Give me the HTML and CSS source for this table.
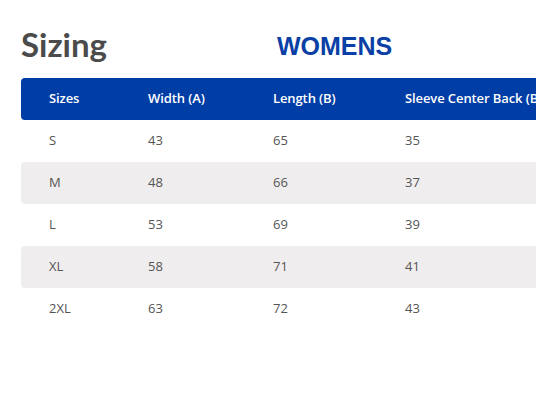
FILE: index.html
```html
<!DOCTYPE html>
<html lang="en">
<head>
    <meta charset="UTF-8">
    <title>Sizing</title>
    <link rel="stylesheet" href="styles.css">
</head>
<body>
    <div class="page">
        <!-- title row -->
        <div class="title-row">
            <h1 class="title">Sizing</h1>
            <h2 class="subtitle">WOMENS</h2>
        </div>

        <!-- size table -->
        <div class="size-table">
            <div class="row head">
                <div class="cell">Sizes</div>
                <div class="cell">Width (A)</div>
                <div class="cell">Length (B)</div>
                <div class="cell">Sleeve Center Back (B)</div>
            </div>
            <div class="row">
                <div class="cell">S</div><div class="cell">43</div><div class="cell">65</div><div class="cell">35</div>
            </div>
            <div class="row alt">
                <div class="cell">M</div><div class="cell">48</div><div class="cell">66</div><div class="cell">37</div>
            </div>
            <div class="row">
                <div class="cell">L</div><div class="cell">53</div><div class="cell">69</div><div class="cell">39</div>
            </div>
            <div class="row alt">
                <div class="cell">XL</div><div class="cell">58</div><div class="cell">71</div><div class="cell">41</div>
            </div>
            <div class="row">
                <div class="cell">2XL</div><div class="cell">63</div><div class="cell">72</div><div class="cell">43</div>
            </div>
        </div>
    </div>
</body>
</html>
```

FILE: styles.css
```css
/* page */
body {
    margin: 0;
    background: #fff;
    font-family: "Open Sans", Lato, sans-serif;
}

.page {
    padding: 24px 0 0 21px;
}

/* title */
.title-row {
    display: flex;
    align-items: flex-end;
    height: 40px;
    margin-bottom: 14px;
}

.title {
    margin: 0;
    width: 256px;
    font-family: Lato, sans-serif;
    font-size: 33px;
    font-weight: 700;
    color: #4b4b4b;
    line-height: 40px;
}

.subtitle {
    margin: 0 0 3px 0;
    font-family: "Liberation Sans", Arial, sans-serif;
    font-size: 25px;
    font-weight: 700;
    color: #0a3fa6;
    line-height: 30px;
}

/* table */
.size-table {
    display: flex;
    flex-direction: column;
    width: 515px;
    overflow: hidden;
}

.row {
    display: grid;
    grid-template-columns: 99px 125px 132px 1fr;
    width: 620px;
    height: 42px;
    align-items: center;
    border-radius: 4px;
    font-size: 13px;
    line-height: 16px;
    color: #555;
}

.row.head {
    background: #003da5;
    color: #fff;
    font-weight: 600;
    letter-spacing: -0.1px;
}

.row.alt {
    background: #efedee;
}

.cell {
    padding-left: 28px;
    padding-bottom: 2px;
    white-space: nowrap;
}
```
